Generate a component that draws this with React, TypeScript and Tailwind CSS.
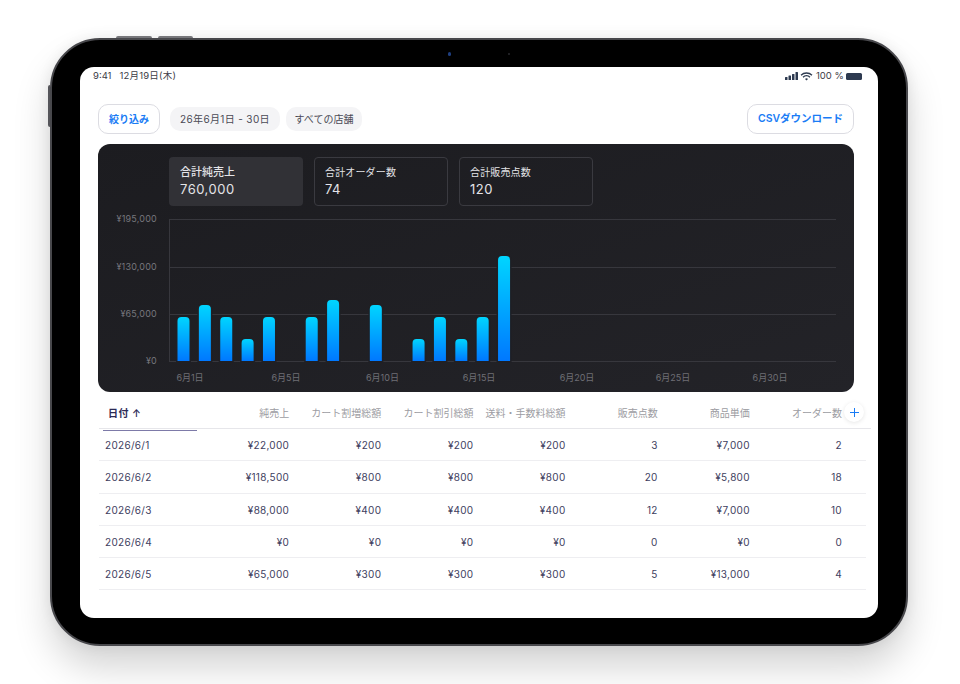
import React from "react";

const bars = [
  { day: 1, top: 317 },
  { day: 2, top: 305 },
  { day: 3, top: 317 },
  { day: 4, top: 339 },
  { day: 5, top: 317 },
  { day: 7, top: 317 },
  { day: 8, top: 300 },
  { day: 10, top: 305 },
  { day: 12, top: 339 },
  { day: 13, top: 317 },
  { day: 14, top: 339 },
  { day: 15, top: 317 },
  { day: 16, top: 256 },
];

const yTicks = [
  { label: "¥195,000", y: 219 },
  { label: "¥130,000", y: 267 },
  { label: "¥65,000", y: 314 },
  { label: "¥0", y: 361 },
];

const xTicks = [
  { label: "6月1日", x: 92 },
  { label: "6月5日", x: 188 },
  { label: "6月10日", x: 284.5 },
  { label: "6月15日", x: 381 },
  { label: "6月20日", x: 479 },
  { label: "6月25日", x: 575 },
  { label: "6月30日", x: 672 },
];

const columns = ["純売上", "カート割増総額", "カート割引総額", "送料・手数料総額", "販売点数", "商品単価", "オーダー数"];

const rows = [
  ["2026/6/1", "¥22,000", "¥200", "¥200", "¥200", "3", "¥7,000", "2"],
  ["2026/6/2", "¥118,500", "¥800", "¥800", "¥800", "20", "¥5,800", "18"],
  ["2026/6/3", "¥88,000", "¥400", "¥400", "¥400", "12", "¥7,000", "10"],
  ["2026/6/4", "¥0", "¥0", "¥0", "¥0", "0", "¥0", "0"],
  ["2026/6/5", "¥65,000", "¥300", "¥300", "¥300", "5", "¥13,000", "4"],
];

const dayX = (day: number) => 85.5 + (day - 1) * 21.37;

const Chart: React.FC = () => (
  // coordinates inside the svg are page y minus 209, page x minus 98
  <svg width="756" height="183" viewBox="0 0 756 183" className="block">
    <defs>
      <linearGradient id="bar" x1="0" y1="0" x2="0" y2="1">
        <stop offset="0" stopColor="#00d5ff" />
        <stop offset="1" stopColor="#0078ff" />
      </linearGradient>
    </defs>
    <line x1="71.5" y1="10" x2="71.5" y2="152" stroke="#37373d" />
    {yTicks.map((t) => (
      <g key={t.label}>
        <line x1="71" y1={t.y - 209 + 0.5} x2="738" y2={t.y - 209 + 0.5} stroke="#37373d" />
        <text x="59" y={t.y - 209 + 3} textAnchor="end" fontSize="9" letterSpacing="0.2" fill="#77777d">
          {t.label}
        </text>
      </g>
    ))}
    {bars.map((b) => (
      <path
        key={b.day}
        d={`M${dayX(b.day) - 6} 152V${b.top - 209 + 4}q0-4 4-4h4q4 0 4 4V152z`}
        fill="url(#bar)"
        stroke="#202025"
        strokeWidth="3"
        paintOrder="stroke"
      />
    ))}
    {xTicks.map((t) => (
      <text key={t.label} x={t.x} y="172" textAnchor="middle" fontSize="9" fill="#6f6f75">
        {t.label}
      </text>
    ))}
  </svg>
);

const StatTab: React.FC<{ label: string; value: string; active?: boolean }> = ({ label, value, active }) => (
  <div
    className={`w-[134px] h-[49px] rounded-[4px] text-[#e4e4e8] ${
      active ? "bg-[#313136] px-[11px] pt-[8px]" : "border border-[#3a3a40] px-[10px] pt-[7px]"
    }`}
  >
    <div className={`leading-[15px] ${active ? "text-[11px] font-medium" : "text-[10px] tracking-[0.15px]"}`}>{label}</div>
    <div className="text-[13px] leading-[18px] tracking-[0.5px]">{value}</div>
  </div>
);

const App: React.FC = () => {
  return (
    <div className="w-[960px] h-[684px] bg-white overflow-hidden pt-[38px] pl-[50px] font-['Inter','Noto_Sans_CJK_JP',sans-serif]">
      {/* Device frame */}
      <div className="relative w-[858px] h-[608px] rounded-[50px] bg-black border-2 border-[#48484c] shadow-[0_22px_36px_rgba(0,0,0,0.17),0_0_14px_rgba(0,0,0,0.07)] pt-[27px] pl-[28px]">
        <div className="absolute -top-[4px] left-[64px] w-[36px] h-[2px] bg-[#77777b] rounded-t-sm" />
        <div className="absolute -top-[4px] left-[106px] w-[35px] h-[2px] bg-[#77777b] rounded-t-sm" />
        <div className="absolute top-[45px] -left-[4px] w-[2px] h-[42px] bg-[#55555a] rounded-l-sm" />
        <div className="absolute top-[12px] left-[396px] w-[3px] h-[4px] rounded-full bg-[#1f3f80]" />
        <div className="absolute top-[13px] left-[456px] w-[2px] h-[2px] rounded-full bg-[#2a2a2e]" />

        {/* Screen */}
        <div className="relative w-[798px] h-[551px] bg-white rounded-[14px] overflow-hidden">
          <div className="flex items-center justify-between h-[18px] pl-[13px] pr-[16px] text-[9.5px] text-[#3c3c46]">
            <div className="flex gap-[8px]">
              <span>9:41</span>
              <span className="tracking-[0.2px]">12月19日(木)</span>
            </div>
            <div className="flex items-center gap-[2px]">
              <svg width="13" height="8" viewBox="0 0 13 8" fill="#2d3a50">
                <rect x="0" y="5" width="2.5" height="3" rx="0.5" />
                <rect x="3.5" y="3.5" width="2.5" height="4.5" rx="0.5" />
                <rect x="7" y="2" width="2.5" height="6" rx="0.5" />
                <rect x="10.5" y="0" width="2.5" height="8" rx="0.5" />
              </svg>
              <svg width="13" height="9" viewBox="0 0 13 9" fill="none" stroke="#2d3a50" strokeWidth="1.3">
                <path d="M1 3.2a8 8 0 0 1 11 0" />
                <path d="M3 5.2a5 5 0 0 1 7 0" />
                <path d="M6.5 8.4 5 6.9a2.2 2.2 0 0 1 3 0z" fill="#2d3a50" stroke="none" />
              </svg>
              <span className="w-[26px] ml-[1px] mr-[2px] whitespace-nowrap">100 %</span>
              <div className="w-[16px] h-[7px] rounded-[1.5px] bg-[#2d3a50]" />
            </div>
          </div>

          <div className="px-[18px]">
            {/* Filters */}
            <div className="flex items-center justify-between mt-[19px] w-[756px]">
              <div className="flex items-center">
                <button className="w-[62px] h-[30px] rounded-[10px] border border-[#dcdce2] text-[10px] font-semibold text-[#1a7cf5]">
                  絞り込み
                </button>
                <span className="ml-[10px] w-[110px] h-[24px] rounded-[10px] bg-[#f4f4f6] text-[10px] tracking-[0.35px] leading-[24px] text-center text-[#4a4a55]">
                  26年6月1日 - 30日
                </span>
                <span className="ml-[6px] w-[76px] h-[24px] rounded-[10px] bg-[#f4f4f6] text-[10px] leading-[24px] text-center text-[#4a4a55]">
                  すべての店舗
                </span>
              </div>
              <button className="w-[107px] h-[30px] rounded-[10px] border border-[#dcdce2] text-[10.5px] font-semibold text-[#1a7cf5]">
                CSVダウンロード
              </button>
            </div>

            {/* Dark chart panel */}
            <div className="mt-[10px] w-[756px] h-[248px] rounded-[12px] bg-gradient-to-br from-[#1c1c20] to-[#232328] pt-[13px]">
              <div className="flex gap-[11px] pl-[71px]">
                <StatTab label="合計純売上" value="760,000" active />
                <StatTab label="合計オーダー数" value="74" />
                <StatTab label="合計販売点数" value="120" />
              </div>
              <div className="mt-[3px]">
                <Chart />
              </div>
            </div>

            {/* Table */}
            <div className="relative mt-[5px] ml-[1px] w-[772px]">
              <div className="grid grid-cols-[98px_repeat(7,92.15px)] h-[32px] border-b border-[#e6e6ea]">
                <div className="ml-[4px] w-[94px] -mb-[1px] border-b border-[#7d7aa8] pl-[5px] text-[10px] leading-[33px] font-semibold text-[#2c2a55] tracking-[0.5px]">
                  日付 ↑
                </div>
                {columns.map((c) => (
                  <div key={c} className="text-right text-[10px] leading-[33px] text-[#9c9ca2] whitespace-nowrap">
                    {c}
                  </div>
                ))}
              </div>
              {rows.map((r) => (
                <div
                  key={r[0]}
                  className="grid grid-cols-[98px_repeat(7,92.15px)] w-[767px] h-[32.3px] border-b border-[#eeeef1] text-[10px] tracking-[0.3px] leading-[33px] text-[#403e60]"
                >
                  {r.map((cell, i) => (
                    <div key={i} className={i === 0 ? "pl-[6px]" : "text-right"}>
                      {cell}
                    </div>
                  ))}
                </div>
              ))}
              <div className="absolute top-[5px] left-[745px] w-[20px] h-[20px] rounded-full bg-white shadow-[0_1px_4px_rgba(0,0,0,0.1)] flex items-center justify-center">
                <svg width="9" height="9" viewBox="0 0 9 9" stroke="#1a7cf5" strokeWidth="1">
                  <path d="M4.5 0v9M0 4.5h9" />
                </svg>
              </div>
            </div>
          </div>
        </div>
      </div>
    </div>
  );
};

export default App;
